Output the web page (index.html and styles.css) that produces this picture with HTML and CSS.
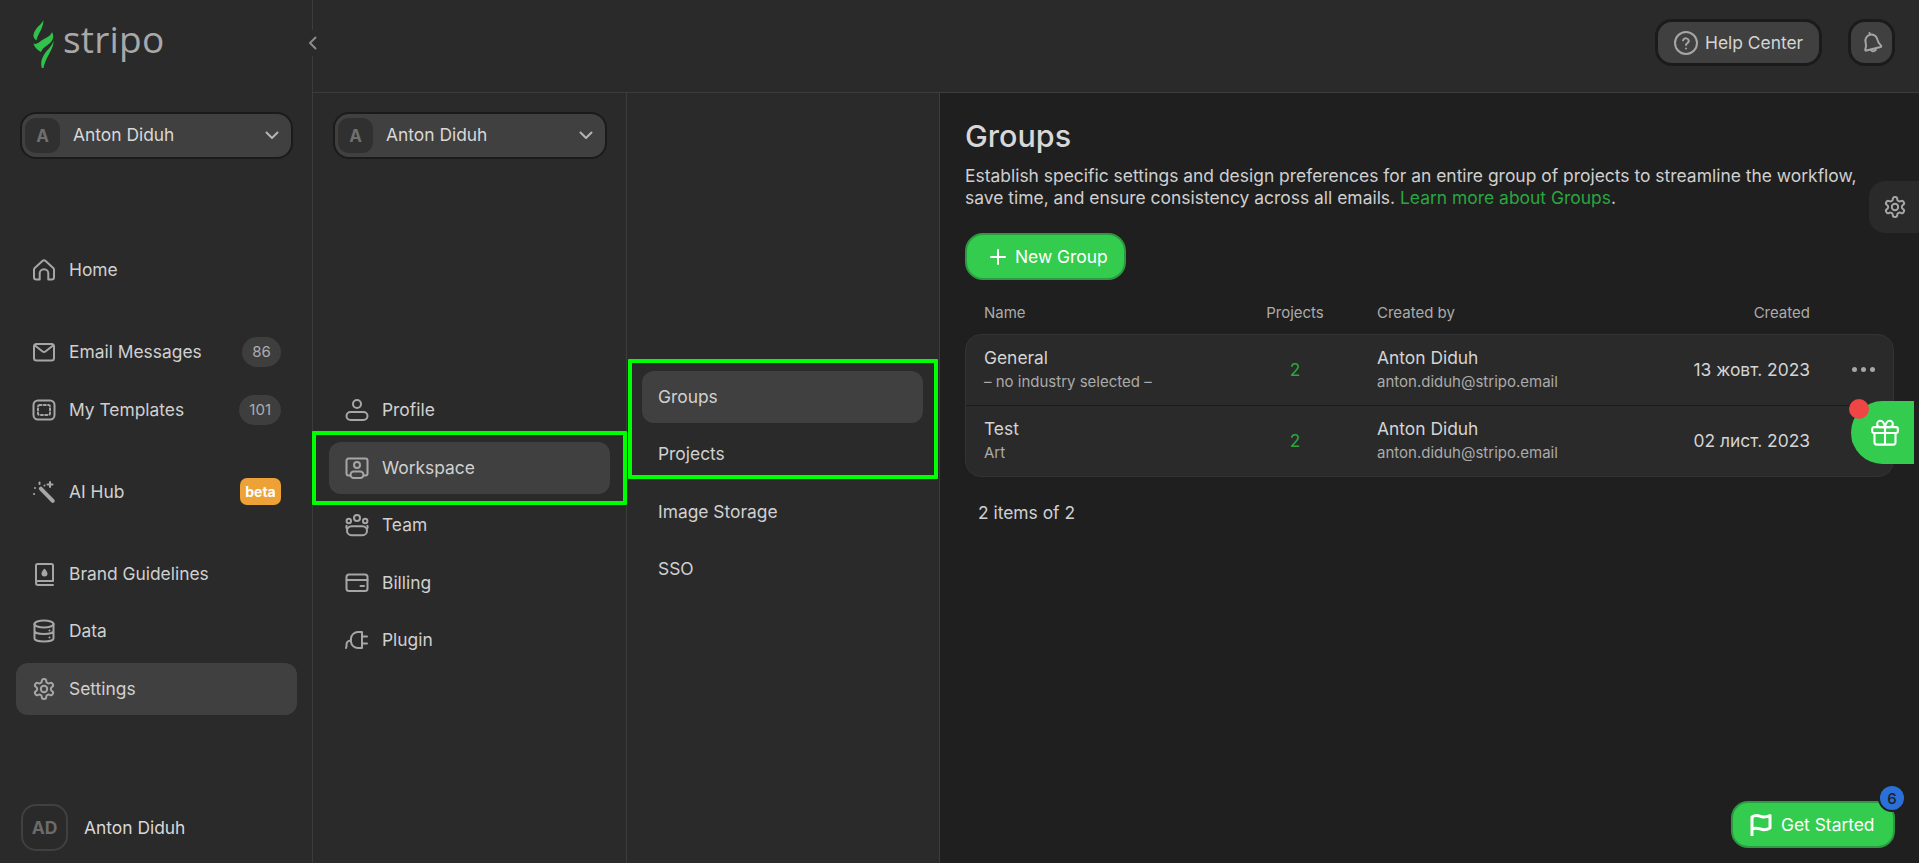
FILE: index.html
```html
<!DOCTYPE html>
<html lang="en">
<head>
<meta charset="utf-8">
<title>Stripo - Groups</title>
<link rel="stylesheet" href="styles.css">
</head>
<body>
<svg class="sprite" aria-hidden="true">
  <symbol id="i-home" viewBox="0 0 24 24"><path d="M2.500 10.200 10.400 3a2.400 2.400 0 0 1 3.200 0l7.900 7.200a1.600 1.600 0 0 1 .5 1.200v7.800a2.300 2.300 0 0 1-2.300 2.300h-3.400v-6a4.300 4.300 0 0 0-8.600 0v6H4.300A2.300 2.300 0 0 1 2 19.200v-7.800a1.600 1.600 0 0 1 .5-1.200z"/></symbol>
  <symbol id="i-mail" viewBox="0 0 24 24"><rect x="2" y="4" width="20" height="16.500" rx="2.500"/><path d="m3 5.500 7.600 6a2.300 2.300 0 0 0 2.800 0l7.600-6"/></symbol>
  <symbol id="i-templates" viewBox="0 0 24 24"><rect x="1.500" y="2.500" width="21" height="19" rx="4.500"/><rect x="6" y="7" width="12" height="10" rx="1.500" stroke-dasharray="2 2.300"/></symbol>
  <symbol id="i-wand" viewBox="0 0 24 24"><path d="M7.400 7.200a2 2 0 0 1 2.800 0l12 12.300a2 2 0 0 1-2.900 2.800L7.400 10a2 2 0 0 1 0-2.800z" fill="#a6a6a6" stroke="none"/><path d="M18 2v5M15.500 4.500h5M7.500 2.500v1.500M3 8v.1M2 14h.1M12.500 5.500v.1"/></symbol>
  <symbol id="i-book" viewBox="0 0 24 24"><path d="M4 19V3.500A1.500 1.500 0 0 1 5.500 2h14A1.500 1.500 0 0 1 21 3.500v15.500H6a2 2 0 0 0 0 4h15"/><path d="M12.500 6.500s3 3 3 5a3 3 0 0 1-6 0c0-2 3-5 3-5z" fill="#a6a6a6" stroke="none"/></symbol>
  <symbol id="i-data" viewBox="0 0 24 24"><ellipse cx="12" cy="5" rx="9.500" ry="3.500"/><path d="M2.500 5v14.500c0 1.800 4.300 3 9.500 3s9.500-1.200 9.500-3V5M2.500 12c0 1.800 4.300 3 9.500 3s9.500-1.200 9.500-3M17.500 11.500v.1M17.500 18.500v.1"/></symbol>
  <symbol id="i-gear" viewBox="0 0 24 24"><path d="M12.220 2h-.44a2 2 0 0 0-2 2v.18a2 2 0 0 1-1 1.730l-.43.250a2 2 0 0 1-2 0l-.15-.08a2 2 0 0 0-2.730.730l-.22.380a2 2 0 0 0 .730 2.730l.15.100a2 2 0 0 1 1 1.720v.510a2 2 0 0 1-1 1.740l-.15.090a2 2 0 0 0-.730 2.730l.22.380a2 2 0 0 0 2.730.730l.15-.08a2 2 0 0 1 2 0l.43.250a2 2 0 0 1 1 1.730V20a2 2 0 0 0 2 2h.44a2 2 0 0 0 2-2v-.18a2 2 0 0 1 1-1.730l.43-.250a2 2 0 0 1 2 0l.15.080a2 2 0 0 0 2.730-.730l.22-.390a2 2 0 0 0-.730-2.730l-.15-.080a2 2 0 0 1-1-1.740v-.5a2 2 0 0 1 1-1.740l.15-.090a2 2 0 0 0 .730-2.730l-.22-.380a2 2 0 0 0-2.730-.730l-.15.080a2 2 0 0 1-2 0l-.43-.250a2 2 0 0 1-1-1.730V4a2 2 0 0 0-2-2z"/><circle cx="12" cy="12" r="3.200"/></symbol>
  <symbol id="i-profile" viewBox="0 0 24 24"><circle cx="12" cy="6" r="4"/><rect x="1.500" y="14" width="21" height="8" rx="4"/></symbol>
  <symbol id="i-workspace" viewBox="0 0 24 24"><path d="M5 19.500H3.500A2 2 0 0 1 1.500 17.500V4.500a2 2 0 0 1 2-2h17a2 2 0 0 1 2 2v13a2 2 0 0 1-2 2H19"/><circle cx="12" cy="9" r="3"/><rect x="5.500" y="15.500" width="13" height="6.500" rx="3.250"/></symbol>
  <symbol id="i-team" viewBox="0 0 24 24"><circle cx="12" cy="5" r="3"/><circle cx="3.800" cy="8" r="2.200"/><circle cx="20.200" cy="8" r="2.200"/><path d="M6.500 13.200h11a4.500 4.500 0 0 1 0 9h-11a4.500 4.500 0 0 1 0-9z"/><path d="M2 15.500A2.500 2.500 0 0 1 1.600 12.800M22 15.500a2.500 2.500 0 0 0 .4-2.700"/></symbol>
  <symbol id="i-card" viewBox="0 0 24 24"><rect x="1.500" y="3.500" width="21" height="16.500" rx="2.500"/><path d="M1.500 9h21M15.500 15h3.500"/></symbol>
  <symbol id="i-plug" viewBox="0 0 24 24"><path d="M17 4h-4a7 7 0 0 0-7 6.500V14a7 7 0 0 0 7 6h4zM17 8.500h5M17 15.500h5M6 12.500c-3 0-4.500 2-4.500 4v2l-.5 1.500"/></symbol>
  <symbol id="i-help" viewBox="0 0 24 24"><circle cx="12" cy="12" r="11"/><path d="M9 9.300a3 3 0 0 1 5.800.8c0 2-2.800 2.300-2.800 4"/><path d="M12 17.500v.1"/></symbol>
  <symbol id="i-bell" viewBox="0 0 24 24"><g transform="rotate(-14 12 12)"><path d="M12 3.500a6 6 0 0 0-6 6c0 3.800-.8 5.500-2 7-.5.700-.2 1.500.7 1.500h14.600c.9 0 1.200-.8.700-1.500-1.200-1.500-2-3.200-2-7a6 6 0 0 0-6-6zM12 3.400V1.600M9.500 18.500a2.600 2.600 0 0 0 5 0"/></g></symbol>
  <symbol id="i-flag" viewBox="0 0 24 24"><path d="M3 23V4c5-3.500 7-.5 11 0 3 .3 5-.5 7-1.500V15c-2.500 1.500-5 2-7.500 1.500-3.500-.7-6-2.500-10.500-.5"/></symbol>
  <symbol id="i-gift" viewBox="0 0 24 24"><rect x="1" y="7" width="22" height="5" rx="1.500"/><path d="M3 12v8a2 2 0 0 0 2 2h14a2 2 0 0 0 2-2v-8M12 7v15M12 7S11 1.500 8 1.500a2.700 2.700 0 0 0 0 5.500zM12 7s1-5.500 4-5.500a2.700 2.700 0 0 1 0 5.500z"/></symbol>
</svg>

<div class="app">
  <aside class="sidebar">
    <div class="logo">
      <svg class="logo-mark" viewBox="0 0 36 54"><path d="M17.500 6C16 10 9 14 7.500 20.500c-.5 2.500 1 4.500 3 6C11.500 20 17 16 17.500 6z"/><path d="M26 18c2 4 1.500 7-1 10-3 3.500-8 5-10 10-3-1.500-7-5-7.500-9 1.500 2 4 .5 8-2.500 4.500-3 9-4 10.500-8.500z"/><path d="M27.500 27c.5 9-9 16-10.500 30-3.500-7-1.500-13 2.500-18.500 3-3.500 6.500-7 8-11.500z"/></svg>
      <span class="logo-text">stripo</span>
    </div>
    <div class="account">
      <span class="account-avatar">A</span>
      <span class="account-name">Anton Diduh</span>
      <svg class="chev" viewBox="0 0 14 9"><path d="m1.500 1.500 5.500 5.500 5.500-5.500"/></svg>
    </div>
    <nav class="side-nav">
      <a class="item"><svg class="icon"><use href="#i-home"/></svg>Home</a>
      <a class="item group-start"><svg class="icon"><use href="#i-mail"/></svg>Email Messages<span class="count">86</span></a>
      <a class="item"><svg class="icon"><use href="#i-templates"/></svg>My Templates<span class="count">101</span></a>
      <a class="item group-start"><svg class="icon"><use href="#i-wand"/></svg>AI Hub<span class="beta">beta</span></a>
      <a class="item group-start"><svg class="icon"><use href="#i-book"/></svg>Brand Guidelines</a>
      <a class="item"><svg class="icon"><use href="#i-data"/></svg>Data</a>
      <a class="item active"><svg class="icon"><use href="#i-gear"/></svg>Settings</a>
    </nav>
    <div class="user">
      <span class="user-avatar">AD</span>
      <span>Anton Diduh</span>
    </div>
    <span class="collapse"><svg viewBox="0 0 9 14"><path d="M7.500 1.500 2 7l5.500 5.500"/></svg></span>
  </aside>

  <div class="workspace">
    <header class="topbar">
      <button class="help"><svg class="icon"><use href="#i-help"/></svg>Help Center</button>
      <button class="bell"><svg class="icon"><use href="#i-bell"/></svg></button>
    </header>
    <div class="panels">
      <nav class="col col-two">
        <div class="account">
          <span class="account-avatar">A</span>
          <span class="account-name">Anton Diduh</span>
          <svg class="chev" viewBox="0 0 14 9"><path d="m1.500 1.500 5.500 5.500 5.500-5.500"/></svg>
        </div>
        <div class="col-two-items">
          <a class="item"><svg class="icon"><use href="#i-profile"/></svg>Profile</a>
          <a class="item active"><svg class="icon"><use href="#i-workspace"/></svg>Workspace</a>
          <a class="item"><svg class="icon"><use href="#i-team"/></svg>Team</a>
          <a class="item"><svg class="icon"><use href="#i-card"/></svg>Billing</a>
          <a class="item"><svg class="icon"><use href="#i-plug"/></svg>Plugin</a>
        </div>
      </nav>
      <nav class="col col-three">
        <a class="item active">Groups</a>
        <a class="item">Projects</a>
        <a class="item">Image Storage</a>
        <a class="item">SSO</a>
      </nav>
      <main class="content">
        <h1>Groups</h1>
        <p class="lead">Establish specific settings and design preferences for an entire group of projects to streamline the workflow,<br>save time, and ensure consistency across all emails. <a class="link">Learn more about Groups</a>.</p>
        <button class="new-group"><svg class="plus" viewBox="0 0 16 16"><path d="M8 1v14M1 8h14"/></svg>New Group</button>
        <div class="thead">
          <span>Name</span>
          <span class="center">Projects</span>
          <span class="by">Created by</span>
          <span class="right">Created</span>
        </div>
        <div class="table">
          <div class="row">
            <div class="cell-stack"><span class="primary">General</span><span class="secondary">– no industry selected –</span></div>
            <span class="center num">2</span>
            <div class="cell-stack by"><span class="primary">Anton Diduh</span><span class="secondary">anton.diduh@stripo.email</span></div>
            <span class="right primary">13 жовт. 2023</span>
            <span class="dots"><i></i><i></i><i></i></span>
          </div>
          <div class="row">
            <div class="cell-stack"><span class="primary">Test</span><span class="secondary">Art</span></div>
            <span class="center num">2</span>
            <div class="cell-stack by"><span class="primary">Anton Diduh</span><span class="secondary">anton.diduh@stripo.email</span></div>
            <span class="right primary">02 лист. 2023</span>
            <span class="dots"><i></i><i></i><i></i></span>
          </div>
        </div>
        <p class="total">2 items of 2</p>
      </main>
    </div>
  </div>

  <span class="mark mark-workspace"></span>
  <span class="mark mark-groups"></span>
  <span class="float-settings"><svg class="icon"><use href="#i-gear"/></svg></span>
  <span class="gift"><span class="gift-dot"></span><svg class="gift-icon"><use href="#i-gift"/></svg></span>
  <button class="get-started"><svg class="flag"><use href="#i-flag"/></svg>Get Started<span class="badge">6</span></button>
</div>
</body>
</html>
```

FILE: styles.css
```css
* { box-sizing: border-box; }
html, body { margin: 0; height: 100%; }
body {
  background: #1f1f1f;
  color: #d4d4d4;
  font-family: Inter, "Noto Sans", sans-serif;
  font-size: 17.400px;
  overflow: hidden;
}
.sprite { display: none; }
button { font: inherit; cursor: pointer; }

.icon {
  width: 24px;
  height: 24px;
  flex: none;
  fill: none;
  stroke: #a6a6a6;
  stroke-width: 2;
  stroke-linecap: round;
  stroke-linejoin: round;
}

.app { position: relative; display: flex; height: 100vh; }

.sidebar {
  position: relative;
  width: 313px;
  flex: none;
  display: flex;
  flex-direction: column;
  padding: 0 15px 12px 16px;
  background: #2a2a2a;
  border-right: 1px solid #3c3c3c;
}
.logo { height: 112px; padding: 14px 0 0 10px; display: flex; align-items: flex-start; gap: 1px; }
.logo-mark { width: 36px; height: 54px; fill: #30c24b; }
.logo-text {
  font-family: "Open Sans", sans-serif;
  font-size: 37px;
  line-height: 44px;
  margin-top: 3px;
  color: #a8a8a8;
  letter-spacing: .2px;
}

.account {
  height: 47px;
  display: flex;
  align-items: center;
  padding: 0 12px 0 3px;
  background: #404040;
  border: 2px solid #1b1b1b;
  border-radius: 16px;
  margin: 0 4px;
  flex: none;
}
.account-avatar {
  width: 35px;
  height: 35px;
  border-radius: 11px;
  background: #303030;
  color: #6f6f6f;
  font-weight: 700;
  font-size: 17px;
  display: flex;
  align-items: center;
  justify-content: center;
}
.account-name { margin-left: 13px; flex: 1; color: #d8d8d8; margin-top: -2px; }
.chev { width: 14px; height: 9px; fill: none; stroke: #b5b5b5; stroke-width: 2; stroke-linecap: round; stroke-linejoin: round; }

.side-nav { display: flex; flex-direction: column; gap: 5.500px; margin-top: 85px; }
.item {
  height: 52px;
  flex: none;
  display: flex;
  align-items: center;
  gap: 13px;
  padding: 0 16px;
  border-radius: 12px;
  color: #d0d0d0;
  line-height: 20px;
}
.item.active { background: #404040; }
.group-start { margin-top: 24.500px; }
.count {
  margin-left: auto;
  height: 30px;
  min-width: 39px;
  padding: 0 10px;
  border-radius: 15px;
  background: #3e3e3e;
  color: #adadad;
  font-size: 15px;
  display: flex;
  align-items: center;
  justify-content: center;
}
.beta {
  margin-left: auto;
  height: 27px;
  width: 41px;
  border-radius: 7px;
  background: #eda238;
  color: #fff;
  font-size: 14px;
  font-weight: 700;
  display: flex;
  align-items: center;
  justify-content: center;
}
.user { margin-top: auto; display: flex; align-items: center; gap: 16px; padding-left: 5px; color: #d8d8d8; }
.user-avatar {
  width: 47px;
  height: 47px;
  border: 2px solid #404040;
  border-radius: 15px;
  color: #6b6b6b;
  font-weight: 700;
  font-size: 17.500px;
  display: flex;
  align-items: center;
  justify-content: center;
}
.collapse {
  position: absolute;
  right: -5px;
  top: 30px;
  width: 10px;
  height: 26px;
  background: #2a2a2a;
  display: flex;
  align-items: center;
  justify-content: center;
}
.collapse svg { width: 9px; height: 14px; fill: none; stroke: #8c8c8c; stroke-width: 2; stroke-linecap: round; stroke-linejoin: round; }

.workspace { flex: 1; min-width: 0; display: flex; flex-direction: column; }
.topbar {
  height: 93px;
  flex: none;
  display: flex;
  align-items: flex-start;
  justify-content: flex-end;
  gap: 26px;
  padding: 19px 24px 0 0;
  background: #2a2a2a;
  border-bottom: 1px solid #3c3c3c;
}
.help, .bell {
  height: 47px;
  display: flex;
  align-items: center;
  background: #404040;
  border: 3px solid #1b1b1b;
  border-radius: 17px;
  color: #d4d4d4;
  padding: 0;
}
.help { width: 167px; padding-left: 16px; gap: 7px; }
.bell { width: 47px; justify-content: center; }

.panels { flex: 1; min-height: 0; display: flex; }
.col {
  flex: none;
  display: flex;
  flex-direction: column;
  background: #2a2a2a;
  border-right: 1px solid #3c3c3c;
  padding: 0 16px;
}
.col-two { width: 314px; padding-top: 19px; }
.col-two .account { margin: 0 3px 0 4px; }
.col-two-items { display: flex; flex-direction: column; gap: 5.500px; margin-top: 225px; }
.col-three { width: 313px; padding-top: 277.500px; gap: 5.500px; padding-left: 15px; }

.content { flex: 1; min-width: 0; padding: 27px 25px 0 25px; }
h1 { margin: 0; font-size: 30.500px; font-weight: 500; line-height: 32px; color: #d8d8d8; }
.lead { margin: 13px 0 0 0; font-size: 17.450px; line-height: 22px; color: #cfcfcf; }
.link { color: #2aa63f; }
.new-group {
  margin: 24px 0 0 0;
  width: 161px;
  height: 47px;
  display: flex;
  align-items: center;
  gap: 9px;
  padding: 0 0 0 23px;
  background: #33cc4f;
  border: 2px solid #2b9a40;
  border-radius: 18px;
  color: #fff;
}
.plus { width: 16px; height: 16px; fill: none; stroke: #fff; stroke-width: 2; stroke-linecap: round; }

.thead, .row {
  display: grid;
  grid-template-columns: 246px 130px 290px 160px 1fr;
  align-items: center;
}
.thead { height: 54px; padding: 10px 0 0 19px; font-size: 15px; color: #ababab; }
.table { background: #2a2a2a; border: 1px solid #333; border-radius: 16px; }
.row { height: 69.500px; padding-left: 18px; }
.row + .row { border-top: 1px solid #1b1b1b; height: 71px; }
.center { text-align: center; }
.right { text-align: right; }
.by { padding-left: 17px; }
.num { color: #2aa63f; }
.cell-stack { display: flex; flex-direction: column; gap: 5px; }
.primary { color: #d4d4d4; line-height: 20px; }
.secondary { font-size: 15px; color: #ababab; line-height: 18px; }
.dots { display: flex; gap: 4px; padding-left: 42px; }
.dots i { width: 5px; height: 5px; border-radius: 50%; background: #a6a6a6; }
.total { margin: 25px 0 0 13px; line-height: 22px; color: #d0d0d0; }

/* Overlays */
.mark { position: absolute; border: 4px solid #00ff00; border-radius: 1px; pointer-events: none; }
.mark-workspace { left: 312px; top: 431px; width: 315px; height: 74px; }
.mark-groups { left: 628px; top: 359px; width: 310px; height: 120px; }
.float-settings {
  position: absolute;
  right: 0;
  top: 181px;
  width: 50px;
  height: 52px;
  padding-left: 14px;
  background: #2a2a2a;
  border-radius: 16px 0 0 16px;
  display: flex;
  align-items: center;
}
.gift {
  position: absolute;
  left: 1851px;
  top: 401px;
  width: 63px;
  height: 63px;
  background: #33cc4f;
  border-radius: 32px 0 0 32px;
  display: flex;
  align-items: center;
  justify-content: center;
}
.gift-dot {
  position: absolute;
  left: -2px;
  top: -2px;
  width: 20px;
  height: 20px;
  border-radius: 50%;
  background: #f04545;
}
.gift-icon { width: 28px; height: 30px; margin-left: 4px; fill: none; stroke: #fff; stroke-width: 1.800; stroke-linejoin: round; }
.get-started {
  position: absolute;
  left: 1731px;
  top: 801px;
  width: 164px;
  height: 47px;
  display: flex;
  align-items: center;
  gap: 8px;
  padding: 0 0 0 16px;
  background: #33cc4f;
  border: 2px solid #2b9a40;
  border-radius: 17px;
  color: #fff;
}
.flag { width: 24px; height: 24px; fill: none; stroke: #fff; stroke-width: 3; stroke-linejoin: round; }
.badge {
  position: absolute;
  right: -13px;
  top: -19px;
  width: 28px;
  height: 28px;
  border-radius: 50%;
  border: 2px solid #1f1f1f;
  background: #2b6fd8;
  color: #1f1f1f;
  font-size: 15px;
  font-weight: 500;
  display: flex;
  align-items: center;
  justify-content: center;
}
```
